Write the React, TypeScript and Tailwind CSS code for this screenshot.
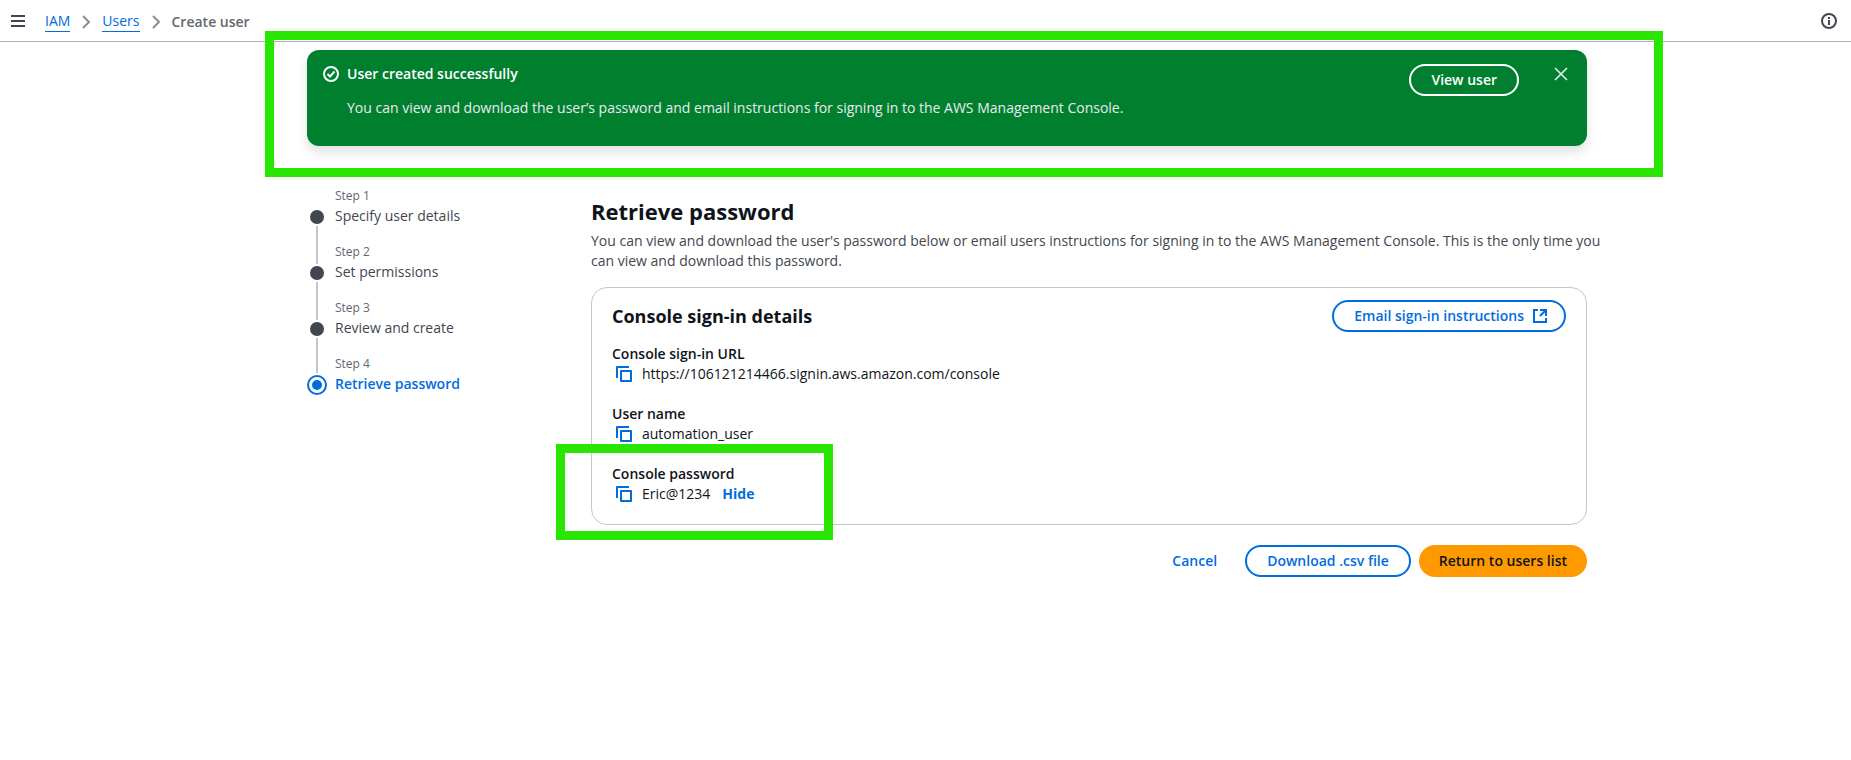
import type { ReactNode } from "react";

const steps = [
  { label: "Step 1", title: "Specify user details" },
  { label: "Step 2", title: "Set permissions" },
  { label: "Step 3", title: "Review and create" },
  { label: "Step 4", title: "Retrieve password" },
];

function Chevron() {
  return (
    <svg className="size-4 text-[#8c8c94]" viewBox="0 0 16 16" fill="none" stroke="currentColor" strokeWidth="2" aria-hidden="true">
      <path d="M5 2l6 6-6 6" />
    </svg>
  );
}

function CopyIcon() {
  return (
    <svg className="size-4" viewBox="0 0 16 16" fill="none" stroke="currentColor" strokeWidth="2" strokeLinejoin="round" aria-hidden="true">
      <path d="M1 12V1h12" />
      <path d="M5 5h10v10H5z" />
    </svg>
  );
}

function ExternalIcon() {
  return (
    <svg className="size-4" viewBox="0 0 16 16" fill="none" stroke="currentColor" strokeWidth="2" aria-hidden="true">
      <path d="M14 8V2H8" />
      <path d="M14 2L8 8" />
      <path d="M6 2H2v12h12v-4" />
    </svg>
  );
}

function Highlight({ className }: { className: string }) {
  return <div aria-hidden="true" className={`pointer-events-none absolute border-9 border-[#28e600] ${className}`} />;
}

function Field({ label, value, children }: { label: string; value: string; children?: ReactNode }) {
  return (
    <div className="relative">
      <dt className="font-semibold">{label}</dt>
      <dd className="flex items-center">
        <button type="button" aria-label={`Copy ${label}`} className="ml-1 mr-2.5 text-[#006ce0]">
          <CopyIcon />
        </button>
        {value}
        {children}
      </dd>
    </div>
  );
}

function Steps() {
  return (
    <nav aria-label="Steps" className="w-[284px] shrink-0 pt-1">
      <ol>
        {steps.map((step, i) => {
          const current = i === steps.length - 1;
          return (
            <li key={step.label} className="flex h-14 gap-2">
              <div className="flex w-5 shrink-0 flex-col items-center gap-0.5">
                <span className={`w-0.5 ${i === 0 ? "" : "bg-[#c6c6cd]"} ${current ? "h-[17px]" : "h-5"}`} />
                {current ? (
                  <span className="flex size-5 items-center justify-center rounded-full border-2 border-[#006ce0]">
                    <span className="size-2.5 rounded-full bg-[#006ce0]" />
                  </span>
                ) : (
                  <>
                    <span className="size-3.5 rounded-full bg-[#424650]" />
                    <span className="w-0.5 flex-1 bg-[#c6c6cd]" />
                  </>
                )}
              </div>
              <div className="flex flex-col gap-0.5">
                <span className="text-xs text-[#656871]">{step.label}</span>
                <span className={current ? "font-semibold text-[#006ce0]" : "text-[#424650]"}>{step.title}</span>
              </div>
            </li>
          );
        })}
      </ol>
    </nav>
  );
}

export default function App() {
  return (
    <div className="min-h-screen bg-white font-['Open_Sans','Noto_Sans',sans-serif] text-sm leading-5 text-[#0f141a]">
      <header className="flex h-[42px] items-center border-b border-[#b4b4bb] pl-2.5 pr-3.5">
        <button type="button" aria-label="Open navigation" className="text-[#424650]">
          <svg className="size-4" viewBox="0 0 16 16" fill="none" stroke="currentColor" strokeWidth="2" aria-hidden="true">
            <path d="M1 3h14M1 8h14M1 13h14" />
          </svg>
        </button>
        <nav aria-label="Breadcrumb" className="ml-[19px] flex flex-1 items-center gap-2 pt-0.5">
          <a href="#iam" className="border-b border-[#006ce0] text-[#006ce0]">IAM</a>
          <Chevron />
          <a href="#users" className="border-b border-[#006ce0] text-[#006ce0]">Users</a>
          <Chevron />
          <span className="font-semibold text-[#656871]">Create user</span>
        </nav>
        <button type="button" aria-label="Info" className="text-[#424650]">
          <svg className="size-4" viewBox="0 0 16 16" fill="none" stroke="currentColor" strokeWidth="2" aria-hidden="true">
            <circle cx="8" cy="8" r="7" />
            <path d="M8 4v2M8 7v5" />
          </svg>
        </button>
      </header>

      <div className="pl-[43px]">
        <div className="mx-auto max-w-[1280px] pt-2">
          <section role="status" className="relative flex h-24 items-start rounded-xl bg-[#00802f] pl-4 pr-[18px] pt-3.5 text-white shadow-[0_6px_12px_rgba(0,7,22,0.12)]">
            <svg className="mt-0.5 size-4" viewBox="0 0 16 16" fill="none" stroke="currentColor" strokeWidth="2" aria-hidden="true">
              <circle cx="8" cy="8" r="7" />
              <path d="M4.5 8l2.5 2.5L11.5 5.5" />
            </svg>
            <div className="ml-2 flex flex-1 flex-col gap-3.5">
              <h2 className="font-semibold">User created successfully</h2>
              <p className="font-medium text-[#ebebf0]">You can view and download the user’s password and email instructions for signing in to the AWS Management Console.</p>
            </div>
            <button type="button" className="h-8 rounded-full border-2 border-white px-5 font-semibold">View user</button>
            <button type="button" aria-label="Dismiss" className="ml-[34px] mt-0.5 text-[#ebebf0]">
              <svg className="size-4" viewBox="0 0 16 16" fill="none" stroke="currentColor" strokeWidth="1.6" aria-hidden="true">
                <path d="M2 2l12 12M14 2L2 14" />
              </svg>
            </button>
            <Highlight className="-left-[42px] -right-[76px] -top-[19px] -bottom-[31px]" />
          </section>

          <div className="flex pt-[38px]">
            <Steps />
            <main className="min-w-0 flex-1 pt-3">
              <h1 className="text-[22px] leading-[30px] font-bold">Retrieve password</h1>
              <p className="-mr-5 pt-[5px] text-[#424650]">
                You can view and download the user's password below or email users instructions for signing in to the AWS Management Console. This is the only time you can view and download this password.
              </p>
              <section className="mt-4 rounded-2xl border border-[#c6c6cd] px-5 pb-5 pt-3">
                <div className="flex items-center justify-between">
                  <h2 className="text-lg leading-6 font-bold">Console sign-in details</h2>
                  <button type="button" className="flex h-8 items-center gap-2 rounded-full border-2 border-[#006ce0] pl-5 pr-4 font-semibold text-[#006ce0]">
                    Email sign-in instructions
                    <ExternalIcon />
                  </button>
                </div>
                <dl className="flex flex-col gap-5 pt-3">
                  <Field label="Console sign-in URL" value="https://106121214466.signin.aws.amazon.com/console" />
                  <Field label="User name" value="automation_user" />
                  <Field label="Console password" value="Eric@1234">
                    <button type="button" className="ml-3 font-bold text-[#006ce0]">Hide</button>
                    <Highlight className="-left-[56px] -top-5 h-24 w-[277px]" />
                  </Field>
                </dl>
              </section>
              <div className="flex justify-end gap-2 pt-5 font-semibold">
                <button type="button" className="h-8 px-5 text-[#006ce0]">Cancel</button>
                <button type="button" className="h-8 rounded-full border-2 border-[#006ce0] px-5 text-[#006ce0]">Download .csv file</button>
                <button type="button" className="h-8 rounded-full bg-[#ff9900] px-5">Return to users list</button>
              </div>
            </main>
          </div>
        </div>
      </div>
    </div>
  );
}
